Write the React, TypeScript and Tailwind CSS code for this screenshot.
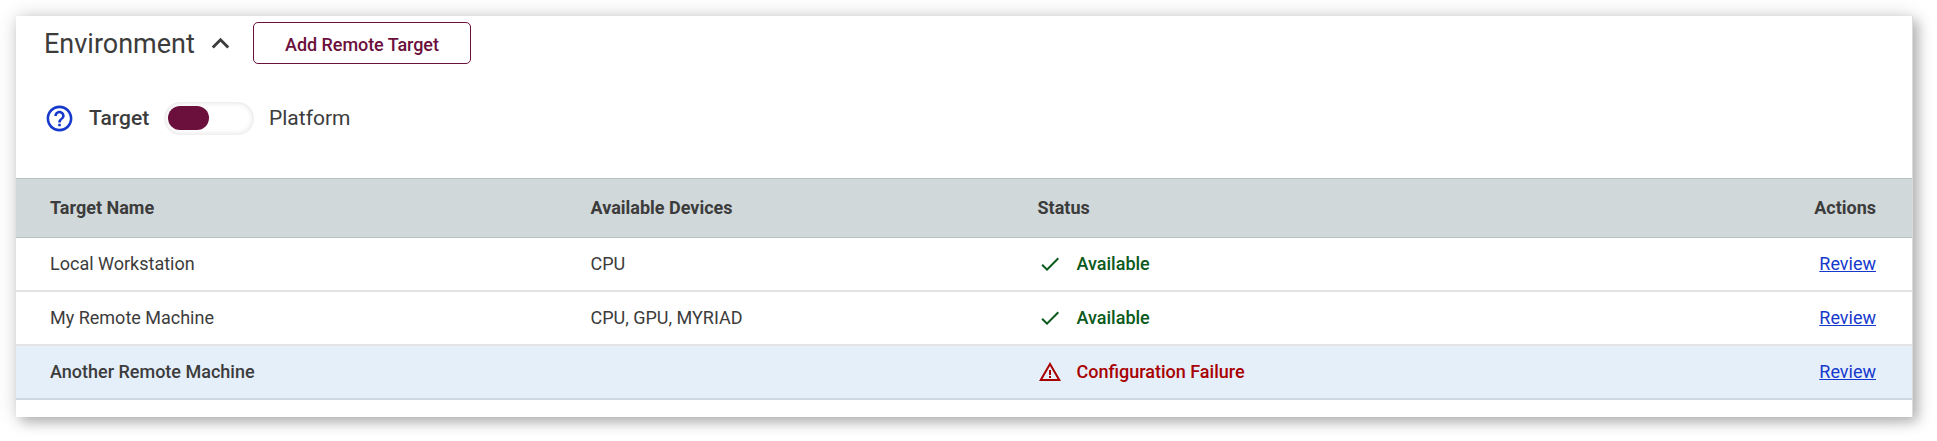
import { MdCheck, MdHelpOutline, MdKeyboardArrowUp, MdWarningAmber } from "react-icons/md";

type Target = { name: string; devices: string; ok: boolean };

const targets: Target[] = [
  { name: "Local Workstation", devices: "CPU", ok: true },
  { name: "My Remote Machine", devices: "CPU, GPU, MYRIAD", ok: true },
  { name: "Another Remote Machine", devices: "", ok: false },
];

function Status({ ok }: { ok: boolean }) {
  return (
    <span className={`flex items-center gap-[14.5px] font-medium ${ok ? "text-[#0b5a1c]" : "text-[#a80000]"}`}>
      {ok ? <MdCheck size={24} /> : <MdWarningAmber size={24} />}
      <span className="pb-0.5">{ok ? "Available" : "Configuration Failure"}</span>
    </span>
  );
}

export default function App() {
  return (
    <div className="h-[441px] w-[1937px] overflow-hidden bg-white p-4 font-['Roboto',sans-serif] text-[#3c3c3c]">
      <section className="h-[401px] w-[1897px] border-r border-[#dcdcdc] bg-white shadow-[0_0_20px_rgba(0,0,0,0.15),5px_5px_12px_rgba(0,0,0,0.25)]">
        <div className="flex h-[54px] items-center pl-7">
          <h2 className="w-[158.5px] pt-0.5 text-[27px] leading-8 font-normal whitespace-nowrap">Environment</h2>
          <MdKeyboardArrowUp size={35} />
          <button className="ml-[15.5px] h-[42px] w-[218px] rounded-[5px] border border-[#6b0f3c] pt-0.5 text-[18px] font-medium tracking-[-0.06px] text-[#6b0f3c]">
            Add Remote Target
          </button>
        </div>
        <div className="flex h-[108px] items-center pb-[11px] pl-7 text-[21px]">
          <MdHelpOutline size={31} className="mb-px text-[#1639cc]" />
          <span className="ml-[14px] w-[75px] pt-px font-medium">Target</span>
          <div className="h-[33px] w-[90px] rounded-full bg-white p-1 shadow-[inset_0_0_6px_rgba(0,0,0,0.14)]">
            <div className="h-6 w-[41px] rounded-xl bg-[#6b0f3c]" />
          </div>
          <span className="ml-[15px] pt-px">Platform</span>
        </div>
        <div className="text-[18px]">
          <div className="grid h-[60px] grid-cols-[540.5px_447px_1fr_auto] items-center border-y border-[#b7c2c2] bg-[#d0d8da] pr-9 pb-0.5 pl-[34px] font-bold">
            <span>Target Name</span>
            <span>Available Devices</span>
            <span>Status</span>
            <span>Actions</span>
          </div>
          {targets.map((t) => (
            <div
              key={t.name}
              className={`grid h-[54px] grid-cols-[540.5px_447.5px_1fr_auto] items-center border-b-2 pr-9 pl-[34px] ${
                t.ok ? "border-[#e3e3e3]" : "border-[#cdd7e0] bg-[#e5effa]"
              }`}
            >
              <span className={t.ok ? "pb-0.5 font-normal" : "pb-0.5 font-medium"}>{t.name}</span>
              <span className="pb-0.5">{t.devices}</span>
              <Status ok={t.ok} />
              <a className="pb-0.5 text-[#1639cc] underline">Review</a>
            </div>
          ))}
        </div>
      </section>
    </div>
  );
}
